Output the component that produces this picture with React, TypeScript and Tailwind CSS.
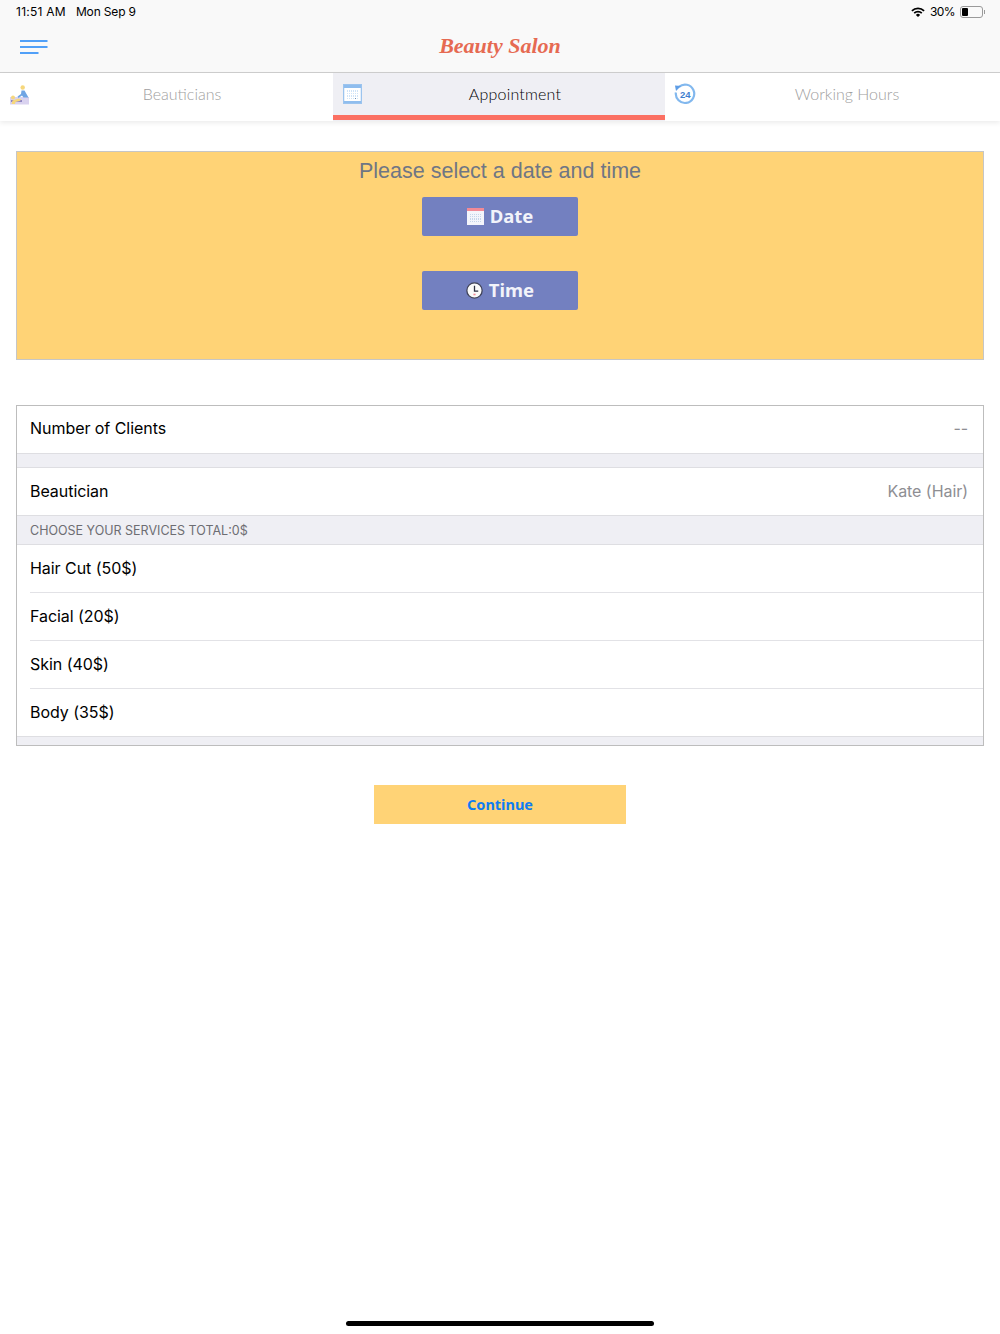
import type { ReactNode } from "react"

const sf = "font-['Inter','Liberation_Sans',sans-serif]"

function MenuIcon() {
  return (
    <svg width="28" height="14" viewBox="0 0 28 14" className="block">
      <path d="M0 1h27.5M0 7h27.5M0 13h18.500" stroke="#1a82f7" strokeWidth="1.600" fill="none" />
    </svg>
  )
}

function WifiIcon() {
  return (
    <svg width="14" height="10" viewBox="0 0 14 10" className="block">
      <path d="M0.300 3.300a9.500 9.500 0 0 1 13.400 0l-1.200 1.200a7.800 7.800 0 0 0-11 0z" fill="#000" />
      <path d="M2.600 5.600a6.200 6.200 0 0 1 8.800 0l-1.200 1.200a4.500 4.500 0 0 0-6.400 0z" fill="#000" />
      <path d="M4.900 7.900a3 3 0 0 1 4.200 0L7 10z" fill="#000" />
    </svg>
  )
}

function BatteryIcon() {
  return (
    <div className="flex items-center">
      <div className="h-[12px] w-[23px] rounded-[3px] border border-[#9a9a9a] p-[1px]">
        <div className="h-full w-[6px] rounded-[1px] bg-black" />
      </div>
      <div className="ml-[1px] h-[4px] w-[1px] bg-[#9a9a9a]" />
    </div>
  )
}

function MassageIcon() {
  return (
    <svg width="20" height="20" viewBox="0 0 20 20" className="block">
      <rect x="0" y="12" width="19" height="7.500" fill="#d9d2ef" />
      <rect x="1" y="15" width="11" height="2" fill="#8f86c4" />
      <circle cx="12.700" cy="2.500" r="2.200" fill="#f6d77c" />
      <path d="M11.500 5.500h3l4 7h-5l-1.500-2-3.500 2.500-1-1.500 3.500-2.500z" fill="#6fa5e4" />
      <circle cx="3" cy="12.500" r="2" fill="#f6d77c" />
      <path d="M1.500 19l1-3.500 6-2 3 1-2 1.500-4 1-.5 2z" fill="#f6d77c" />
    </svg>
  )
}

function CalendarTabIcon() {
  const cells = Array.from({ length: 24 })
  return (
    <div className="flex h-[20px] w-[19px] flex-col border border-[#9cc4ee] bg-[#e4effb]">
      <div className="h-[3px] bg-[#8fbdee]" />
      <div className="mx-[1px] grid flex-1 grid-cols-6 gap-[1px] bg-white p-[2px]">
        {cells.map((_, i) => (
          <div key={i} className={i === 22 ? "bg-[#6f8fb5]" : "bg-[#cfe3f8]"} />
        ))}
      </div>
      <div className="h-[2px] bg-[#8fbdee]" />
    </div>
  )
}

function HoursIcon() {
  return (
    <svg width="22" height="22" viewBox="0 0 22 22" className="block">
      <path d="M5 3.800A9.200 9.200 0 1 1 1.900 9.500" fill="none" stroke="#82b8ee" strokeWidth="2.200" />
      <path d="M1 2.500l6 .5-5 5z" fill="#5f9ee6" />
      <text x="11.200" y="14.500" textAnchor="middle" fontSize="9.500" fontWeight="700" fill="#3f7fcf" fontFamily="Liberation Sans, sans-serif">24</text>
    </svg>
  )
}

function DateIcon() {
  const cells = Array.from({ length: 30 })
  return (
    <div className="flex h-[17px] w-[17px] flex-col bg-[#f4f5fb]">
      <div className="h-[3px] bg-[#f28a96]" />
      <div className="grid flex-1 grid-cols-6 gap-[1px] px-[3px] py-[3px]">
        {cells.map((_, i) => (
          <div key={i} className="bg-[#c5d5ea]" />
        ))}
      </div>
    </div>
  )
}

function ClockIcon() {
  return (
    <svg width="17" height="17" viewBox="0 0 16 16" className="block">
      <circle cx="8" cy="8" r="7.200" fill="#fafafa" stroke="#3f4258" strokeWidth="1.200" />
      <path d="M8 3.500V8.500H11.500" fill="none" stroke="#2d2f40" strokeWidth="1.200" />
      <rect x="7" y="11" width="2" height="1.500" fill="#f28a96" />
    </svg>
  )
}

function Tab({ icon, iconClass, label, active, width }: { icon: ReactNode; iconClass: string; label: string; active?: boolean; width: string }) {
  return (
    <div className={`relative flex h-full items-center pb-[6px] ${width} ${active ? "bg-[#efeff4]" : "bg-white"}`}>
      <div className={`absolute ${iconClass}`}>{icon}</div>
      <span className={`flex-1 text-center font-['Lato',sans-serif] text-[16px] font-light ${active ? "pl-[32px] text-black tracking-[0.2px]" : "pl-[30px] text-[#a0a0a0]"}`}>
        {label}
      </span>
      {active && <div className="absolute inset-x-0 bottom-[1px] h-[5px] bg-[#fb6f62]" />}
    </div>
  )
}

function ActionButton({ icon, label, className }: { icon: ReactNode; label: string; className?: string }) {
  return (
    <div className={`flex h-[39px] w-[156px] items-center justify-center gap-[6px] rounded-[2px] bg-[#7380c0] ${className ?? ""}`}>
      {icon}
      <span className="font-['Noto_Sans',sans-serif] text-[18.500px] font-bold leading-none text-[#f2f3fa]">{label}</span>
    </div>
  )
}

function Row({ label, value, className }: { label: string; value?: string; className?: string }) {
  return (
    <div className={`flex items-center justify-between bg-white pr-[15px] text-[16px] tracking-[-0.05px] text-black ${className ?? ""}`}>
      <span>{label}</span>
      {value && <span className="text-[#8e8e93]">{value}</span>}
    </div>
  )
}

export default function App() {
  const services = ["Hair Cut (50$)", "Facial (20$)", "Skin (40$)", "Body (35$)"]

  return (
    <div className={`relative h-[1334px] w-[1000px] overflow-hidden bg-white ${sf}`}>
      <header className="h-[73px] border-b border-[#cfcfcf] bg-[#f9f9f9]">
        <div className="flex h-[24px] items-center justify-between pl-[16px] pr-[15px] text-[12px] text-black">
          <div className="flex gap-[10px]">
            <span className="tracking-[0.25px]">11:51 AM</span>
            <span className="tracking-[-0.15px]">Mon Sep 9</span>
          </div>
          <div className="flex items-center">
            <WifiIcon />
            <span className="ml-[5px] mr-[5px] tracking-[-0.6px]">30%</span>
            <BatteryIcon />
          </div>
        </div>
        <div className="relative flex h-[48px] items-center justify-center pb-[5px]">
          <div className="absolute left-[20px] top-[16px]">
            <MenuIcon />
          </div>
          <span className="font-['Liberation_Serif',serif] text-[22px] font-bold italic leading-none text-[#e66a52]">Beauty Salon</span>
        </div>
      </header>

      <nav className="flex h-[48px] px-[1px] shadow-[0_2px_5px_rgba(0,0,0,0.08)]">
        <Tab icon={<MassageIcon />} iconClass="left-[9px] top-[12px]" label="Beauticians" width="w-[332px]" />
        <Tab icon={<CalendarTabIcon />} iconClass="left-[10px] top-[11px]" label="Appointment" active width="w-[332px]" />
        <Tab icon={<HoursIcon />} iconClass="left-[9px] top-[10px]" label="Working Hours" width="flex-1" />
      </nav>

      <main className="px-[16px] pt-[30px]">
        <section className="flex h-[209px] flex-col items-center border border-[#c6c6c6] bg-[#ffd376]">
          <p className="mt-[6px] font-['Liberation_Sans',sans-serif] text-[21.500px] leading-[26px] text-[#6f7684]">Please select a date and time</p>
          <ActionButton icon={<DateIcon />} label="Date" className="mt-[13px]" />
          <ActionButton icon={<ClockIcon />} label="Time" className="mt-[35px]" />
        </section>

        <section className="mt-[45px] border border-[#bdbdbd] bg-[#efeff4]">
          <Row label="Number of Clients" value="--" className="h-[47px] pb-[3px] pl-[13px]" />
          <div className="h-[15px] border-y border-[#dedee2]" />
          <Row label="Beautician" value="Kate (Hair)" className="h-[47px] pb-[2px] pl-[13px]" />
          <div className="flex h-[30px] items-center border-y border-[#dedee2] pl-[13px] pt-[2px] text-[12.500px] text-[#6d6d72]">
            CHOOSE YOUR SERVICES TOTAL:0$
          </div>
          <div className="bg-white pl-[13px]">
            {services.map((s, i) => (
              <Row key={s} label={s} className={i < services.length - 1 ? "h-[48px] border-b border-[#e2e2e6] pb-[2px]" : "h-[47px] pb-[2px]"} />
            ))}
          </div>
          <div className="h-[9px] border-t border-[#dedee2]" />
        </section>

        <div className="mt-[39px] flex justify-center">
          <div className="flex h-[39px] w-[252px] items-center justify-center bg-[#ffd376] font-['Noto_Sans',sans-serif] text-[14.500px] font-bold text-[#0f7cf2]">
            Continue
          </div>
        </div>
      </main>

      <div className="absolute bottom-[8px] left-[346px] h-[5px] w-[308px] rounded-full bg-black" />
    </div>
  )
}
